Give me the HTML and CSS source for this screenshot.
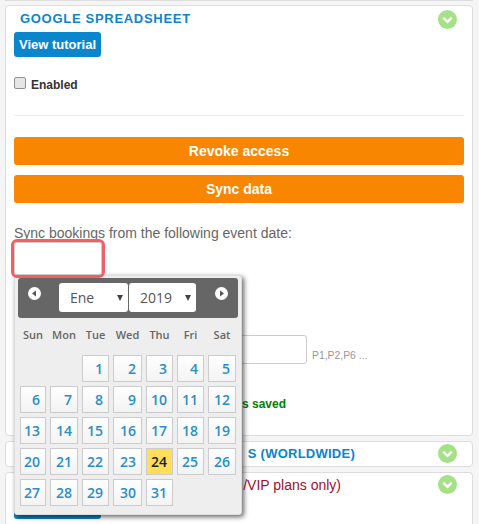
FILE: index.html
```html
<!DOCTYPE html>
<html lang="en">
<head>
  <meta charset="UTF-8" />
  <meta name="viewport" content="width=device-width, initial-scale=1.0" />
  <title>Integrations</title>
  <link rel="stylesheet" href="styles.css">
</head>
<body>
  <div class="panel-prev"></div>

  <div class="panel panel-main">
    <span class="toggle"><svg viewBox="0 0 19 19"><circle cx="9.5" cy="9.5" r="9.5" fill="#a5e287"/><path d="M5.2 7.6l4.3 4.2 4.3-4.2" fill="none" stroke="#fff" stroke-width="2.4"/></svg></span>
    <h2 class="title">GOOGLE SPREADSHEET</h2>
    <a class="btn-blue">View tutorial</a>
    <label class="check"><input type="checkbox"><span>Enabled</span></label>
    <hr class="rule">
    <a class="btn-orange">Revoke access</a>
    <a class="btn-orange">Sync data</a>
    <p class="sync-label">Sync bookings from the following event date:</p>
    <input class="date-input" type="text">
    <div class="columns-row">
      <input class="columns-input" type="text">
      <span class="hint">P1,P2,P6 ...</span>
    </div>
    <p class="saved">s saved</p>
  </div>

  <div class="panel panel-small">
    <span class="toggle"><svg viewBox="0 0 19 19"><circle cx="9.5" cy="9.5" r="9.5" fill="#a5e287"/><path d="M5.2 7.6l4.3 4.2 4.3-4.2" fill="none" stroke="#fff" stroke-width="2.4"/></svg></span>
    <h2 class="title title-right">S (WORLDWIDE)</h2>
  </div>

  <div class="panel panel-last">
    <span class="toggle"><svg viewBox="0 0 19 19"><circle cx="9.5" cy="9.5" r="9.5" fill="#a5e287"/><path d="M5.2 7.6l4.3 4.2 4.3-4.2" fill="none" stroke="#fff" stroke-width="2.4"/></svg></span>
    <p class="plans">/VIP plans only)</p>
    <a class="btn-under"></a>
  </div>

  <div class="datepicker">
    <div class="dp-head">
      <span class="dp-nav"><svg viewBox="0 0 13 13"><circle cx="6.5" cy="6.5" r="6.5" fill="#fff"/><path d="M8 3.4v6.2L4 6.5z" fill="#555"/></svg></span>
      <div class="dp-selects">
        <span class="dp-select">Ene<i class="caret"></i></span>
        <span class="dp-select dp-year">2019<i class="caret"></i></span>
      </div>
      <span class="dp-nav"><svg viewBox="0 0 13 13"><circle cx="6.5" cy="6.5" r="6.5" fill="#fff"/><path d="M5 3.4v6.2L9 6.5z" fill="#555"/></svg></span>
    </div>
    <div class="dp-grid">
      <span class="dow">Sun</span><span class="dow">Mon</span><span class="dow">Tue</span><span class="dow">Wed</span><span class="dow">Thu</span><span class="dow">Fri</span><span class="dow">Sat</span>
      <span></span><span></span>
      <a class="day">1</a><a class="day">2</a><a class="day">3</a><a class="day">4</a><a class="day">5</a>
      <a class="day">6</a><a class="day">7</a><a class="day">8</a><a class="day">9</a><a class="day">10</a><a class="day">11</a><a class="day">12</a>
      <a class="day">13</a><a class="day">14</a><a class="day">15</a><a class="day">16</a><a class="day">17</a><a class="day">18</a><a class="day">19</a>
      <a class="day">20</a><a class="day">21</a><a class="day">22</a><a class="day">23</a><a class="day today">24</a><a class="day">25</a><a class="day">26</a>
      <a class="day">27</a><a class="day">28</a><a class="day">29</a><a class="day">30</a><a class="day">31</a>
    </div>
  </div>
</body>
</html>
```

FILE: styles.css
```css
html, body {
  height: 524px;
  overflow: hidden;
}
body {
  margin: 0;
  padding: 0 6px 0 5px;
  box-sizing: border-box;
  position: relative;
  background: #f5f5f5;
  font-family: "Liberation Sans", Arial, sans-serif;
}
.panel-prev {
  height: 1px;
  margin-bottom: 4px;
  background: #ddd;
}
.panel {
  position: relative;
  background: #fff;
  border: 1px solid #ddd;
  border-radius: 4px;
  margin-bottom: 5px;
}
.panel-main {
  height: 431px;
  box-sizing: border-box;
  padding: 5px 8px 0 8px;
}
.panel-small {
  height: 26px;
  box-sizing: border-box;
}
.panel-last {
  height: 52px;
  box-sizing: border-box;
  padding: 0 8px;
  margin-bottom: 0;
  border-bottom: 0;
  border-radius: 4px 4px 0 0;
}
.toggle {
  position: absolute;
  top: 2px;
  right: 15px;
  width: 19px;
  height: 19px;
}
.panel-main .toggle {
  top: 4px;
}
.toggle svg {
  display: block;
}
.title {
  margin: 0 0 0 6px;
  font-size: 13px;
  line-height: 16px;
  letter-spacing: 0.7px;
  color: #0a86cc;
}
.title-right {
  margin: 0;
  padding: 4px 117px 0 0;
  text-align: right;
  letter-spacing: 0.25px;
}
.btn-blue {
  display: block;
  width: 87px;
  margin-top: 5px;
  height: 25px;
  line-height: 25px;
  text-align: center;
  font-size: 13px;
  font-weight: bold;
  color: #fff;
  background: #0a86cc;
  border-radius: 3px;
}
.check {
  display: flex;
  align-items: flex-start;
  margin-top: 20px;
  font-size: 12px;
  font-weight: bold;
  color: #333;
  gap: 5px;
}
.check input {
  appearance: none;
  box-sizing: border-box;
  margin: 0;
  width: 12px;
  height: 12px;
  background: #e6e6e6;
  border: 1px solid #929292;
  border-radius: 2px;
}
.check span {
  line-height: 14px;
  margin-top: 1px;
}
.rule {
  border: 0;
  border-top: 1px solid #eee;
  margin: 23px 0 21px 0;
}
.btn-orange {
  display: block;
  height: 28px;
  line-height: 28px;
  margin-bottom: 10px;
  text-align: center;
  font-size: 14px;
  font-weight: bold;
  color: #fff;
  background: #f98600;
  border-radius: 3px;
}
.sync-label {
  margin: 22px 0 1px 0;
  font-size: 14px;
  line-height: 16px;
  color: #666;
}
.date-input {
  display: block;
  position: relative;
  z-index: 2;
  box-sizing: border-box;
  width: 88px;
  height: 33px;
  padding: 0;
  background: #fff;
  border: 1px solid #ccc;
  border-radius: 3px;
  outline: 3px solid #f25f64;
}
.columns-row {
  display: flex;
  align-items: flex-end;
  gap: 5px;
  margin-top: 60px;
}
.columns-input {
  box-sizing: border-box;
  width: 293px;
  height: 29px;
  padding: 0;
  border: 1px solid #ccc;
  border-radius: 3px;
}
.hint {
  font-size: 10.4px;
  line-height: 16px;
  color: #999;
}
.saved {
  margin: 33px 0 0 0;
  padding-right: 178px;
  text-align: right;
  font-size: 12px;
  line-height: 14px;
  font-weight: bold;
  color: #008000;
}
.plans {
  margin: 0;
  padding: 4px 123px 0 0;
  text-align: right;
  font-size: 14px;
  line-height: 16px;
  color: #a00f30;
}
.btn-under {
  display: block;
  width: 87px;
  height: 25px;
  margin-top: 1px;
  background: #0a86cc;
  border-radius: 3px;
}

/* calendar popup, sits over the panels */
.datepicker {
  position: absolute;
  z-index: 1;
  left: 14px;
  top: 275px;
  width: 228px;
  height: 240px;
  box-sizing: border-box;
  padding: 2px 3px 0 3px;
  font-family: "Open Sans", sans-serif;
  background: #eee;
  border: 1px solid #ddd;
  border-radius: 3px;
  box-shadow: 2px 2px 5px rgba(0, 0, 0, 0.6);
}
.dp-head {
  display: flex;
  align-items: center;
  justify-content: space-between;
  height: 40px;
  padding: 0 10px;
  box-sizing: border-box;
  background: #666;
  border-radius: 3px;
}
.dp-nav {
  width: 13px;
  height: 13px;
  margin-top: -9px;
}
.dp-nav svg {
  display: block;
}
.dp-selects {
  display: flex;
  gap: 1px;
  margin: -2px 1px 0 0;
}
.dp-select {
  position: relative;
  box-sizing: border-box;
  width: 69px;
  height: 29px;
  padding-left: 11px;
  line-height: 29px;
  font-size: 14px;
  color: #555;
  background: #fff;
  border-radius: 3px;
}
.dp-year {
  width: 67px;
}
.caret {
  position: absolute;
  right: 5px;
  top: 12px;
  border-left: 3.5px solid transparent;
  border-right: 3.5px solid transparent;
  border-top: 6px solid #444;
}
.dp-grid {
  display: grid;
  grid-template-columns: 26px 28px 27px 29px 27px 27px 28px;
  gap: 4px;
  grid-auto-rows: 27px;
  margin: 6px 0 0 2px;
}
.dow {
  font-size: 11px;
  font-weight: 600;
  line-height: 22px;
  text-align: center;
  color: #666;
}
.day {
  box-sizing: border-box;
  padding: 3px 5px 0 0;
  text-align: right;
  font-size: 14px;
  font-weight: 600;
  line-height: 19px;
  color: #2a8fc7;
  background: linear-gradient(#fff, #f3f3f3);
  border: 1px solid #ccc;
}
.today {
  color: #222;
  background: #ffdf5a;
}
```
